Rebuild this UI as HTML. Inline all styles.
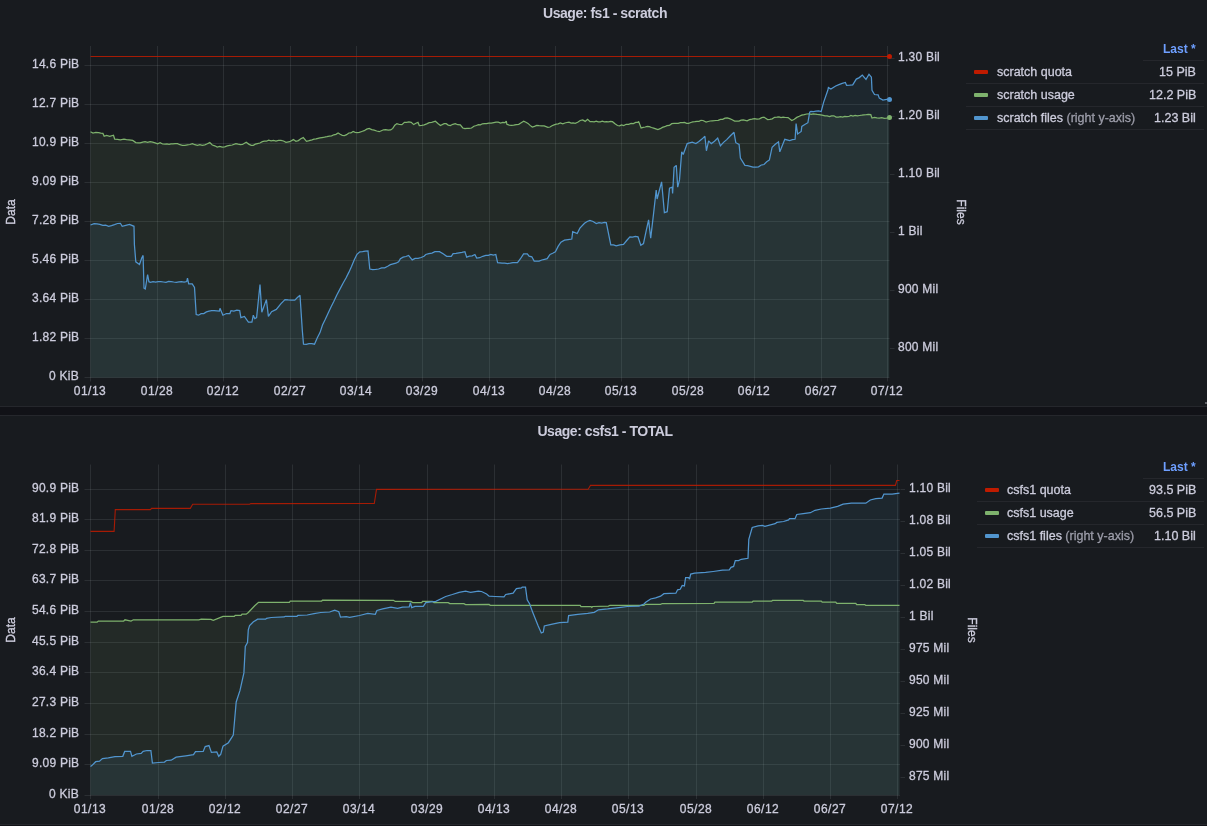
<!DOCTYPE html>
<html><head><meta charset="utf-8"><style>
html,body{margin:0;padding:0;}
body{width:1207px;height:826px;overflow:hidden;background:#111217;position:relative;font-family:"Liberation Sans", sans-serif;-webkit-font-smoothing:antialiased;}
.panel{position:absolute;left:0;width:1207px;background:#181b1f;}
svg{position:absolute;left:0;top:0;}
.t{will-change:transform;-webkit-text-stroke:0.3px currentColor;}
</style></head><body>
<div class="panel" style="top:0;height:406px;border-bottom:1px solid #25272c;"></div>
<div class="panel" style="top:415px;height:408px;border-top:1px solid #25272c;border-bottom:1px solid #25272c;"></div>
<svg width="1207" height="826" viewBox="0 0 1207 826">

<rect x="84.5" y="65" width="805.0" height="1" fill="rgba(240,250,255,0.09)"/>
<rect x="84.5" y="104" width="805.0" height="1" fill="rgba(240,250,255,0.09)"/>
<rect x="84.5" y="143" width="805.0" height="1" fill="rgba(240,250,255,0.09)"/>
<rect x="84.5" y="182" width="805.0" height="1" fill="rgba(240,250,255,0.09)"/>
<rect x="84.5" y="221" width="805.0" height="1" fill="rgba(240,250,255,0.09)"/>
<rect x="84.5" y="260" width="805.0" height="1" fill="rgba(240,250,255,0.09)"/>
<rect x="84.5" y="299" width="805.0" height="1" fill="rgba(240,250,255,0.09)"/>
<rect x="84.5" y="338" width="805.0" height="1" fill="rgba(240,250,255,0.09)"/>
<rect x="84.5" y="377" width="805.0" height="1" fill="rgba(240,250,255,0.09)"/>
<rect x="90" y="46" width="1" height="335.5" fill="rgba(240,250,255,0.09)"/>
<rect x="157" y="46" width="1" height="335.5" fill="rgba(240,250,255,0.09)"/>
<rect x="223" y="46" width="1" height="335.5" fill="rgba(240,250,255,0.09)"/>
<rect x="290" y="46" width="1" height="335.5" fill="rgba(240,250,255,0.09)"/>
<rect x="356" y="46" width="1" height="335.5" fill="rgba(240,250,255,0.09)"/>
<rect x="422" y="46" width="1" height="335.5" fill="rgba(240,250,255,0.09)"/>
<rect x="489" y="46" width="1" height="335.5" fill="rgba(240,250,255,0.09)"/>
<rect x="555" y="46" width="1" height="335.5" fill="rgba(240,250,255,0.09)"/>
<rect x="621" y="46" width="1" height="335.5" fill="rgba(240,250,255,0.09)"/>
<rect x="688" y="46" width="1" height="335.5" fill="rgba(240,250,255,0.09)"/>
<rect x="754" y="46" width="1" height="335.5" fill="rgba(240,250,255,0.09)"/>
<rect x="821" y="46" width="1" height="335.5" fill="rgba(240,250,255,0.09)"/>
<rect x="887" y="46" width="1" height="335.5" fill="rgba(240,250,255,0.09)"/>
<rect x="890.0" y="58" width="4.5" height="1" fill="rgba(240,250,255,0.09)"/>
<rect x="890.0" y="116" width="4.5" height="1" fill="rgba(240,250,255,0.09)"/>
<rect x="890.0" y="174" width="4.5" height="1" fill="rgba(240,250,255,0.09)"/>
<rect x="890.0" y="232" width="4.5" height="1" fill="rgba(240,250,255,0.09)"/>
<rect x="890.0" y="290" width="4.5" height="1" fill="rgba(240,250,255,0.09)"/>
<rect x="890.0" y="348" width="4.5" height="1" fill="rgba(240,250,255,0.09)"/>
<path d="M90.5,131.7 L93.0,133.0 L95.8,132.5 L98.6,132.6 L100.8,133.1 L102.9,133.4 L104.2,136.3 L106.6,135.5 L109.7,136.3 L113.5,135.2 L114.7,139.2 L117.5,139.3 L120.3,139.8 L124.0,139.2 L126.5,139.6 L129.0,139.8 L132.7,140.4 L135.8,142.6 L138.0,142.9 L140.2,142.9 L142.7,142.1 L145.1,141.7 L147.6,142.4 L150.1,141.7 L152.6,142.1 L155.1,142.8 L157.6,143.8 L160.1,142.6 L162.6,144.0 L165.0,144.2 L167.0,144.0 L169.0,144.4 L171.0,143.8 L173.0,143.9 L175.0,143.6 L177.5,143.6 L179.9,144.7 L182.4,145.4 L184.9,145.4 L187.4,144.8 L189.9,144.5 L192.4,143.6 L194.9,144.7 L197.4,145.4 L199.9,144.7 L202.3,145.3 L204.8,144.8 L207.3,143.8 L209.8,142.6 L212.3,145.0 L214.8,145.8 L217.2,147.0 L219.7,146.4 L222.2,147.0 L224.7,146.8 L227.2,145.8 L229.7,145.4 L232.2,145.0 L235.9,143.6 L238.1,144.2 L240.3,144.7 L242.5,144.5 L246.2,142.3 L248.7,144.1 L251.2,145.4 L253.3,145.3 L255.3,144.1 L257.4,143.6 L259.9,143.0 L262.3,141.7 L264.4,141.1 L266.5,141.2 L268.6,140.1 L271.1,140.9 L273.5,140.3 L276.0,141.1 L278.5,140.3 L281.0,140.4 L283.5,141.0 L286.0,142.3 L289.7,141.7 L293.4,139.6 L295.9,141.3 L298.4,140.6 L300.8,138.8 L303.3,137.6 L306.5,141.3 L309.2,140.7 L312.0,139.8 L314.0,139.1 L316.0,138.9 L318.0,138.3 L320.0,137.9 L322.0,137.6 L324.5,137.2 L326.9,136.7 L329.4,136.1 L331.6,135.8 L333.8,134.8 L335.9,134.3 L338.1,133.0 L340.2,134.3 L342.3,135.3 L344.4,135.5 L346.6,134.7 L348.8,133.0 L350.9,132.9 L353.1,131.4 L355.2,132.3 L357.2,132.6 L359.3,132.4 L361.8,131.5 L364.2,130.7 L366.7,129.1 L369.2,128.4 L371.7,129.6 L374.2,130.1 L376.7,131.0 L379.2,131.7 L381.4,130.7 L383.5,129.8 L385.7,129.6 L388.2,130.2 L390.7,129.9 L392.8,128.4 L394.8,125.2 L396.9,123.6 L399.4,124.5 L401.9,124.6 L404.4,122.4 L406.7,122.3 L408.9,122.0 L411.2,122.4 L413.7,124.6 L415.9,123.3 L418.0,122.4 L419.3,125.5 L421.8,125.3 L424.2,124.9 L426.7,123.9 L429.2,122.6 L431.7,122.4 L435.4,121.2 L437.9,123.5 L440.4,125.5 L444.1,123.6 L446.2,123.7 L448.2,125.1 L450.3,125.5 L452.8,124.3 L455.3,123.6 L457.8,124.7 L460.3,124.9 L462.8,128.0 L464.9,128.7 L466.9,128.3 L469.0,128.4 L471.5,128.0 L473.9,126.2 L476.4,125.5 L478.4,124.6 L480.4,124.9 L482.4,123.8 L484.4,123.6 L486.4,123.6 L488.9,123.2 L491.3,123.1 L493.8,122.6 L496.0,122.2 L498.3,122.1 L500.5,123.0 L502.8,122.4 L505.0,122.6 L506.3,121.2 L506.9,124.3 L509.2,125.1 L511.4,125.3 L513.7,125.1 L516.2,124.6 L518.7,124.3 L521.2,122.7 L523.7,121.2 L525.9,122.3 L528.0,123.4 L530.1,125.4 L532.3,127.1 L534.5,126.4 L536.7,125.5 L539.2,125.7 L541.7,125.8 L544.2,125.8 L547.9,127.3 L550.0,127.0 L552.0,125.7 L554.1,124.9 L556.2,124.2 L558.2,123.9 L560.3,123.0 L562.8,123.9 L564.9,123.0 L566.9,122.5 L569.0,122.1 L571.1,123.1 L573.1,123.0 L575.2,123.4 L577.7,122.3 L580.2,120.5 L582.7,119.9 L585.2,121.4 L587.6,119.3 L590.1,121.7 L592.1,121.6 L594.2,121.8 L596.2,121.1 L598.2,121.8 L600.3,121.9 L602.3,121.2 L604.4,121.9 L606.4,121.7 L608.4,121.9 L610.5,121.5 L612.5,121.7 L615.0,123.8 L617.5,125.5 L619.6,125.8 L621.6,124.9 L623.7,125.5 L626.2,124.3 L628.6,124.3 L631.1,123.4 L633.4,123.6 L635.7,122.4 L638.0,122.4 L638.6,121.4 L641.1,128.0 L643.2,127.4 L645.2,127.0 L647.3,126.3 L649.4,126.7 L651.5,127.5 L653.7,128.1 L655.8,128.8 L657.9,129.6 L660.2,128.7 L662.4,127.4 L664.7,126.7 L667.0,125.7 L669.4,125.4 L671.7,123.7 L674.0,123.4 L676.1,123.3 L678.2,123.3 L680.4,122.6 L682.5,122.6 L684.6,122.5 L686.6,123.4 L688.7,123.3 L690.8,122.5 L692.8,121.9 L694.9,121.7 L696.9,121.3 L699.0,121.3 L701.0,120.3 L703.0,120.5 L706.1,122.1 L708.2,121.5 L710.2,121.0 L712.3,120.8 L716.0,120.5 L718.2,120.4 L720.5,119.4 L722.7,119.4 L725.0,118.1 L727.2,118.0 L729.7,118.6 L732.2,119.7 L734.6,121.1 L736.8,121.0 L739.0,121.0 L741.1,120.1 L743.3,119.9 L747.1,120.8 L749.5,119.7 L752.0,119.2 L754.5,118.6 L757.0,119.0 L759.5,118.9 L761.7,117.6 L763.9,117.1 L767.6,119.6 L769.9,119.3 L772.2,118.8 L774.6,117.3 L776.9,117.1 L779.0,116.8 L781.0,117.5 L783.1,117.1 L785.6,117.5 L788.1,117.6 L791.8,120.5 L794.3,119.3 L796.8,117.4 L799.3,116.3 L801.7,115.1 L804.2,114.6 L806.7,114.0 L809.2,113.9 L811.2,114.4 L813.2,113.9 L815.2,114.1 L817.2,114.4 L819.2,114.6 L822.1,115.2 L825.0,115.9 L827.2,115.9 L829.4,116.6 L831.6,115.8 L833.9,115.8 L836.1,117.0 L838.3,117.0 L840.5,116.7 L842.6,117.1 L844.7,116.3 L846.8,116.7 L848.8,116.5 L850.9,115.5 L853.0,116.0 L855.1,115.5 L857.3,115.8 L859.6,115.5 L861.8,115.2 L864.1,114.8 L866.3,114.7 L868.6,114.5 L870.8,114.7 L872.0,118.1 L874.5,117.5 L876.9,117.9 L879.3,118.1 L881.8,117.7 L884.2,118.4 L886.6,118.1 L889.2,117.5 L889.2,377.5 L90.5,377.5 Z" fill="#87ac73" fill-opacity="0.1" stroke="none"/>
<path d="M90.5,225.0 L94.1,223.6 L97.0,223.9 L99.9,224.3 L102.8,225.4 L105.7,225.2 L108.6,226.3 L111.5,225.6 L114.5,224.6 L117.5,223.5 L120.4,223.3 L122.2,226.3 L125.8,225.4 L129.5,224.5 L134.0,226.3 L134.4,244.5 L135.8,261.8 L139.5,264.5 L141.7,258.1 L143.1,255.4 L144.0,288.1 L145.3,289.0 L147.6,274.5 L148.9,281.7 L150.4,282.3 L153.0,281.7 L155.6,282.1 L158.2,281.6 L160.8,281.6 L163.4,282.0 L166.0,282.4 L168.6,281.5 L171.1,281.6 L173.7,282.0 L176.3,282.3 L178.9,281.8 L181.5,281.6 L184.1,282.2 L186.7,281.6 L187.5,278.1 L188.7,283.9 L192.2,283.9 L194.5,287.4 L196.2,314.6 L198.5,315.2 L201.1,313.6 L203.8,313.6 L206.4,311.9 L209.0,311.1 L211.6,310.6 L214.2,310.6 L216.8,310.8 L219.4,311.0 L220.0,308.3 L222.9,315.2 L226.4,313.5 L229.9,313.5 L231.0,310.6 L233.9,311.0 L236.8,310.2 L239.7,310.6 L240.9,317.6 L244.4,316.4 L248.4,322.2 L251.9,322.2 L253.3,315.2 L254.8,318.7 L256.6,317.6 L260.0,284.5 L261.8,312.3 L266.4,299.6 L268.4,316.4 L271.6,311.7 L276.3,309.4 L281.0,303.6 L285.0,299.6 L288.3,299.9 L291.5,300.1 L294.8,300.1 L297.4,297.5 L300.0,295.3 L302.3,330.3 L303.5,344.2 L306.2,344.3 L309.0,343.7 L311.8,343.7 L314.5,344.2 L317.2,338.0 L320.0,332.6 L322.5,325.0 L325.3,319.3 L328.2,313.0 L331.0,306.9 L333.9,301.3 L336.7,295.2 L339.8,289.4 L342.9,283.5 L346.0,278.0 L348.8,272.4 L351.5,266.4 L354.2,259.9 L357.0,254.3 L359.8,251.8 L362.5,251.6 L365.3,251.2 L368.0,250.9 L369.8,269.0 L372.7,269.5 L375.7,269.3 L378.6,269.0 L381.6,267.8 L384.7,267.8 L387.7,266.3 L390.4,264.7 L393.1,263.9 L395.9,263.2 L398.6,261.7 L400.4,258.6 L403.1,257.1 L405.9,256.5 L408.6,255.4 L412.2,259.9 L415.1,258.4 L418.1,258.3 L421.1,257.5 L424.0,256.3 L425.8,254.5 L428.8,253.7 L431.9,253.1 L434.9,251.7 L439.5,251.7 L443.1,253.8 L446.7,256.3 L451.3,256.3 L453.1,253.6 L456.1,253.4 L459.0,252.8 L461.9,252.3 L464.9,251.7 L466.7,257.2 L469.4,256.2 L472.2,255.8 L474.9,254.5 L476.7,258.1 L479.7,257.7 L482.8,256.3 L485.8,255.4 L488.3,255.4 L490.8,254.4 L493.3,255.0 L495.8,254.5 L497.6,262.6 L502.1,263.2 L504.8,263.2 L507.6,263.5 L510.3,263.1 L513.0,262.6 L517.5,262.6 L520.3,259.0 L523.6,253.9 L527.3,253.9 L529.1,256.2 L531.8,256.8 L534.2,261.1 L539.1,261.1 L541.8,260.0 L544.5,259.3 L547.2,258.6 L550.0,254.4 L552.7,253.3 L555.4,251.7 L558.1,246.4 L560.9,242.2 L564.5,240.2 L568.1,239.6 L571.8,239.0 L572.7,231.7 L577.2,233.5 L579.9,228.1 L584.5,223.2 L587.2,221.5 L589.9,220.5 L593.1,221.5 L596.3,223.5 L599.0,222.6 L601.7,223.0 L604.4,222.3 L606.3,222.6 L610.8,244.8 L613.5,244.9 L616.2,245.9 L619.9,244.8 L623.5,244.4 L626.7,240.5 L629.9,236.8 L632.6,237.2 L635.3,236.3 L638.0,236.8 L640.8,245.3 L643.5,243.5 L646.0,231.6 L648.6,219.9 L650.7,238.1 L653.5,214.1 L656.2,190.0 L657.1,199.0 L661.6,181.8 L664.4,212.6 L667.2,211.7 L669.5,188.1 L672.3,187.2 L672.6,193.5 L674.1,167.2 L676.3,165.4 L677.7,187.2 L679.5,179.9 L681.7,151.8 L683.2,154.5 L687.2,143.6 L692.2,142.1 L695.9,143.6 L698.9,141.6 L701.9,139.1 L704.9,136.3 L706.4,150.8 L708.6,140.9 L711.3,143.6 L714.5,141.3 L717.7,138.1 L720.4,145.8 L723.5,142.4 L726.7,139.6 L730.4,135.8 L734.0,132.3 L735.8,142.7 L739.1,144.5 L740.4,158.1 L744.9,165.4 L747.6,165.7 L750.3,166.3 L753.0,167.2 L755.8,167.2 L758.5,166.8 L761.3,165.0 L764.0,164.5 L766.7,161.8 L769.4,159.9 L772.1,147.2 L775.3,144.2 L778.5,141.8 L779.8,151.8 L784.8,139.3 L789.7,140.5 L792.4,139.6 L795.1,139.3 L796.1,123.6 L797.6,133.9 L801.2,131.4 L801.8,126.4 L804.8,124.5 L807.9,122.7 L809.7,112.1 L810.9,111.5 L813.5,111.6 L816.0,111.2 L818.6,110.9 L821.2,111.5 L823.6,102.4 L827.8,90.3 L828.4,87.6 L830.9,89.1 L835.7,86.0 L838.9,84.7 L842.2,83.4 L845.4,82.4 L846.6,85.4 L849.7,85.2 L852.7,84.8 L856.3,79.1 L859.3,77.6 L862.3,75.1 L866.0,79.4 L869.0,74.3 L871.4,77.2 L872.0,90.3 L874.5,94.5 L878.1,94.9 L879.3,98.1 L882.9,100.0 L886.6,99.4 L889.2,99.4 L889.2,377.5 L90.5,377.5 Z" fill="#5195be" fill-opacity="0.1" stroke="none"/>
<path d="M90.5,131.7 L93.0,133.0 L95.8,132.5 L98.6,132.6 L100.8,133.1 L102.9,133.4 L104.2,136.3 L106.6,135.5 L109.7,136.3 L113.5,135.2 L114.7,139.2 L117.5,139.3 L120.3,139.8 L124.0,139.2 L126.5,139.6 L129.0,139.8 L132.7,140.4 L135.8,142.6 L138.0,142.9 L140.2,142.9 L142.7,142.1 L145.1,141.7 L147.6,142.4 L150.1,141.7 L152.6,142.1 L155.1,142.8 L157.6,143.8 L160.1,142.6 L162.6,144.0 L165.0,144.2 L167.0,144.0 L169.0,144.4 L171.0,143.8 L173.0,143.9 L175.0,143.6 L177.5,143.6 L179.9,144.7 L182.4,145.4 L184.9,145.4 L187.4,144.8 L189.9,144.5 L192.4,143.6 L194.9,144.7 L197.4,145.4 L199.9,144.7 L202.3,145.3 L204.8,144.8 L207.3,143.8 L209.8,142.6 L212.3,145.0 L214.8,145.8 L217.2,147.0 L219.7,146.4 L222.2,147.0 L224.7,146.8 L227.2,145.8 L229.7,145.4 L232.2,145.0 L235.9,143.6 L238.1,144.2 L240.3,144.7 L242.5,144.5 L246.2,142.3 L248.7,144.1 L251.2,145.4 L253.3,145.3 L255.3,144.1 L257.4,143.6 L259.9,143.0 L262.3,141.7 L264.4,141.1 L266.5,141.2 L268.6,140.1 L271.1,140.9 L273.5,140.3 L276.0,141.1 L278.5,140.3 L281.0,140.4 L283.5,141.0 L286.0,142.3 L289.7,141.7 L293.4,139.6 L295.9,141.3 L298.4,140.6 L300.8,138.8 L303.3,137.6 L306.5,141.3 L309.2,140.7 L312.0,139.8 L314.0,139.1 L316.0,138.9 L318.0,138.3 L320.0,137.9 L322.0,137.6 L324.5,137.2 L326.9,136.7 L329.4,136.1 L331.6,135.8 L333.8,134.8 L335.9,134.3 L338.1,133.0 L340.2,134.3 L342.3,135.3 L344.4,135.5 L346.6,134.7 L348.8,133.0 L350.9,132.9 L353.1,131.4 L355.2,132.3 L357.2,132.6 L359.3,132.4 L361.8,131.5 L364.2,130.7 L366.7,129.1 L369.2,128.4 L371.7,129.6 L374.2,130.1 L376.7,131.0 L379.2,131.7 L381.4,130.7 L383.5,129.8 L385.7,129.6 L388.2,130.2 L390.7,129.9 L392.8,128.4 L394.8,125.2 L396.9,123.6 L399.4,124.5 L401.9,124.6 L404.4,122.4 L406.7,122.3 L408.9,122.0 L411.2,122.4 L413.7,124.6 L415.9,123.3 L418.0,122.4 L419.3,125.5 L421.8,125.3 L424.2,124.9 L426.7,123.9 L429.2,122.6 L431.7,122.4 L435.4,121.2 L437.9,123.5 L440.4,125.5 L444.1,123.6 L446.2,123.7 L448.2,125.1 L450.3,125.5 L452.8,124.3 L455.3,123.6 L457.8,124.7 L460.3,124.9 L462.8,128.0 L464.9,128.7 L466.9,128.3 L469.0,128.4 L471.5,128.0 L473.9,126.2 L476.4,125.5 L478.4,124.6 L480.4,124.9 L482.4,123.8 L484.4,123.6 L486.4,123.6 L488.9,123.2 L491.3,123.1 L493.8,122.6 L496.0,122.2 L498.3,122.1 L500.5,123.0 L502.8,122.4 L505.0,122.6 L506.3,121.2 L506.9,124.3 L509.2,125.1 L511.4,125.3 L513.7,125.1 L516.2,124.6 L518.7,124.3 L521.2,122.7 L523.7,121.2 L525.9,122.3 L528.0,123.4 L530.1,125.4 L532.3,127.1 L534.5,126.4 L536.7,125.5 L539.2,125.7 L541.7,125.8 L544.2,125.8 L547.9,127.3 L550.0,127.0 L552.0,125.7 L554.1,124.9 L556.2,124.2 L558.2,123.9 L560.3,123.0 L562.8,123.9 L564.9,123.0 L566.9,122.5 L569.0,122.1 L571.1,123.1 L573.1,123.0 L575.2,123.4 L577.7,122.3 L580.2,120.5 L582.7,119.9 L585.2,121.4 L587.6,119.3 L590.1,121.7 L592.1,121.6 L594.2,121.8 L596.2,121.1 L598.2,121.8 L600.3,121.9 L602.3,121.2 L604.4,121.9 L606.4,121.7 L608.4,121.9 L610.5,121.5 L612.5,121.7 L615.0,123.8 L617.5,125.5 L619.6,125.8 L621.6,124.9 L623.7,125.5 L626.2,124.3 L628.6,124.3 L631.1,123.4 L633.4,123.6 L635.7,122.4 L638.0,122.4 L638.6,121.4 L641.1,128.0 L643.2,127.4 L645.2,127.0 L647.3,126.3 L649.4,126.7 L651.5,127.5 L653.7,128.1 L655.8,128.8 L657.9,129.6 L660.2,128.7 L662.4,127.4 L664.7,126.7 L667.0,125.7 L669.4,125.4 L671.7,123.7 L674.0,123.4 L676.1,123.3 L678.2,123.3 L680.4,122.6 L682.5,122.6 L684.6,122.5 L686.6,123.4 L688.7,123.3 L690.8,122.5 L692.8,121.9 L694.9,121.7 L696.9,121.3 L699.0,121.3 L701.0,120.3 L703.0,120.5 L706.1,122.1 L708.2,121.5 L710.2,121.0 L712.3,120.8 L716.0,120.5 L718.2,120.4 L720.5,119.4 L722.7,119.4 L725.0,118.1 L727.2,118.0 L729.7,118.6 L732.2,119.7 L734.6,121.1 L736.8,121.0 L739.0,121.0 L741.1,120.1 L743.3,119.9 L747.1,120.8 L749.5,119.7 L752.0,119.2 L754.5,118.6 L757.0,119.0 L759.5,118.9 L761.7,117.6 L763.9,117.1 L767.6,119.6 L769.9,119.3 L772.2,118.8 L774.6,117.3 L776.9,117.1 L779.0,116.8 L781.0,117.5 L783.1,117.1 L785.6,117.5 L788.1,117.6 L791.8,120.5 L794.3,119.3 L796.8,117.4 L799.3,116.3 L801.7,115.1 L804.2,114.6 L806.7,114.0 L809.2,113.9 L811.2,114.4 L813.2,113.9 L815.2,114.1 L817.2,114.4 L819.2,114.6 L822.1,115.2 L825.0,115.9 L827.2,115.9 L829.4,116.6 L831.6,115.8 L833.9,115.8 L836.1,117.0 L838.3,117.0 L840.5,116.7 L842.6,117.1 L844.7,116.3 L846.8,116.7 L848.8,116.5 L850.9,115.5 L853.0,116.0 L855.1,115.5 L857.3,115.8 L859.6,115.5 L861.8,115.2 L864.1,114.8 L866.3,114.7 L868.6,114.5 L870.8,114.7 L872.0,118.1 L874.5,117.5 L876.9,117.9 L879.3,118.1 L881.8,117.7 L884.2,118.4 L886.6,118.1 L889.2,117.5" fill="none" stroke="#7eb26d" stroke-width="1.25" stroke-linejoin="miter" stroke-miterlimit="2"/>
<path d="M90.5,225.0 L94.1,223.6 L97.0,223.9 L99.9,224.3 L102.8,225.4 L105.7,225.2 L108.6,226.3 L111.5,225.6 L114.5,224.6 L117.5,223.5 L120.4,223.3 L122.2,226.3 L125.8,225.4 L129.5,224.5 L134.0,226.3 L134.4,244.5 L135.8,261.8 L139.5,264.5 L141.7,258.1 L143.1,255.4 L144.0,288.1 L145.3,289.0 L147.6,274.5 L148.9,281.7 L150.4,282.3 L153.0,281.7 L155.6,282.1 L158.2,281.6 L160.8,281.6 L163.4,282.0 L166.0,282.4 L168.6,281.5 L171.1,281.6 L173.7,282.0 L176.3,282.3 L178.9,281.8 L181.5,281.6 L184.1,282.2 L186.7,281.6 L187.5,278.1 L188.7,283.9 L192.2,283.9 L194.5,287.4 L196.2,314.6 L198.5,315.2 L201.1,313.6 L203.8,313.6 L206.4,311.9 L209.0,311.1 L211.6,310.6 L214.2,310.6 L216.8,310.8 L219.4,311.0 L220.0,308.3 L222.9,315.2 L226.4,313.5 L229.9,313.5 L231.0,310.6 L233.9,311.0 L236.8,310.2 L239.7,310.6 L240.9,317.6 L244.4,316.4 L248.4,322.2 L251.9,322.2 L253.3,315.2 L254.8,318.7 L256.6,317.6 L260.0,284.5 L261.8,312.3 L266.4,299.6 L268.4,316.4 L271.6,311.7 L276.3,309.4 L281.0,303.6 L285.0,299.6 L288.3,299.9 L291.5,300.1 L294.8,300.1 L297.4,297.5 L300.0,295.3 L302.3,330.3 L303.5,344.2 L306.2,344.3 L309.0,343.7 L311.8,343.7 L314.5,344.2 L317.2,338.0 L320.0,332.6 L322.5,325.0 L325.3,319.3 L328.2,313.0 L331.0,306.9 L333.9,301.3 L336.7,295.2 L339.8,289.4 L342.9,283.5 L346.0,278.0 L348.8,272.4 L351.5,266.4 L354.2,259.9 L357.0,254.3 L359.8,251.8 L362.5,251.6 L365.3,251.2 L368.0,250.9 L369.8,269.0 L372.7,269.5 L375.7,269.3 L378.6,269.0 L381.6,267.8 L384.7,267.8 L387.7,266.3 L390.4,264.7 L393.1,263.9 L395.9,263.2 L398.6,261.7 L400.4,258.6 L403.1,257.1 L405.9,256.5 L408.6,255.4 L412.2,259.9 L415.1,258.4 L418.1,258.3 L421.1,257.5 L424.0,256.3 L425.8,254.5 L428.8,253.7 L431.9,253.1 L434.9,251.7 L439.5,251.7 L443.1,253.8 L446.7,256.3 L451.3,256.3 L453.1,253.6 L456.1,253.4 L459.0,252.8 L461.9,252.3 L464.9,251.7 L466.7,257.2 L469.4,256.2 L472.2,255.8 L474.9,254.5 L476.7,258.1 L479.7,257.7 L482.8,256.3 L485.8,255.4 L488.3,255.4 L490.8,254.4 L493.3,255.0 L495.8,254.5 L497.6,262.6 L502.1,263.2 L504.8,263.2 L507.6,263.5 L510.3,263.1 L513.0,262.6 L517.5,262.6 L520.3,259.0 L523.6,253.9 L527.3,253.9 L529.1,256.2 L531.8,256.8 L534.2,261.1 L539.1,261.1 L541.8,260.0 L544.5,259.3 L547.2,258.6 L550.0,254.4 L552.7,253.3 L555.4,251.7 L558.1,246.4 L560.9,242.2 L564.5,240.2 L568.1,239.6 L571.8,239.0 L572.7,231.7 L577.2,233.5 L579.9,228.1 L584.5,223.2 L587.2,221.5 L589.9,220.5 L593.1,221.5 L596.3,223.5 L599.0,222.6 L601.7,223.0 L604.4,222.3 L606.3,222.6 L610.8,244.8 L613.5,244.9 L616.2,245.9 L619.9,244.8 L623.5,244.4 L626.7,240.5 L629.9,236.8 L632.6,237.2 L635.3,236.3 L638.0,236.8 L640.8,245.3 L643.5,243.5 L646.0,231.6 L648.6,219.9 L650.7,238.1 L653.5,214.1 L656.2,190.0 L657.1,199.0 L661.6,181.8 L664.4,212.6 L667.2,211.7 L669.5,188.1 L672.3,187.2 L672.6,193.5 L674.1,167.2 L676.3,165.4 L677.7,187.2 L679.5,179.9 L681.7,151.8 L683.2,154.5 L687.2,143.6 L692.2,142.1 L695.9,143.6 L698.9,141.6 L701.9,139.1 L704.9,136.3 L706.4,150.8 L708.6,140.9 L711.3,143.6 L714.5,141.3 L717.7,138.1 L720.4,145.8 L723.5,142.4 L726.7,139.6 L730.4,135.8 L734.0,132.3 L735.8,142.7 L739.1,144.5 L740.4,158.1 L744.9,165.4 L747.6,165.7 L750.3,166.3 L753.0,167.2 L755.8,167.2 L758.5,166.8 L761.3,165.0 L764.0,164.5 L766.7,161.8 L769.4,159.9 L772.1,147.2 L775.3,144.2 L778.5,141.8 L779.8,151.8 L784.8,139.3 L789.7,140.5 L792.4,139.6 L795.1,139.3 L796.1,123.6 L797.6,133.9 L801.2,131.4 L801.8,126.4 L804.8,124.5 L807.9,122.7 L809.7,112.1 L810.9,111.5 L813.5,111.6 L816.0,111.2 L818.6,110.9 L821.2,111.5 L823.6,102.4 L827.8,90.3 L828.4,87.6 L830.9,89.1 L835.7,86.0 L838.9,84.7 L842.2,83.4 L845.4,82.4 L846.6,85.4 L849.7,85.2 L852.7,84.8 L856.3,79.1 L859.3,77.6 L862.3,75.1 L866.0,79.4 L869.0,74.3 L871.4,77.2 L872.0,90.3 L874.5,94.5 L878.1,94.9 L879.3,98.1 L882.9,100.0 L886.6,99.4 L889.2,99.4" fill="none" stroke="#5195ce" stroke-width="1.25" stroke-linejoin="miter" stroke-miterlimit="2"/>
<path d="M90.5,56.5 L889.2,56.5" fill="none" stroke="#bf1b00" stroke-opacity="0.85" stroke-width="1.1" stroke-linejoin="miter" stroke-miterlimit="2"/>
<circle cx="889.5" cy="56.5" r="2.5" fill="#bf1b00"/>
<circle cx="889.5" cy="99.4" r="2.5" fill="#5195ce"/>
<circle cx="889.5" cy="117.5" r="2.5" fill="#7eb26d"/>
<rect x="84.5" y="489" width="815.5" height="1" fill="rgba(240,250,255,0.09)"/>
<rect x="84.5" y="519" width="815.5" height="1" fill="rgba(240,250,255,0.09)"/>
<rect x="84.5" y="550" width="815.5" height="1" fill="rgba(240,250,255,0.09)"/>
<rect x="84.5" y="580" width="815.5" height="1" fill="rgba(240,250,255,0.09)"/>
<rect x="84.5" y="611" width="815.5" height="1" fill="rgba(240,250,255,0.09)"/>
<rect x="84.5" y="642" width="815.5" height="1" fill="rgba(240,250,255,0.09)"/>
<rect x="84.5" y="672" width="815.5" height="1" fill="rgba(240,250,255,0.09)"/>
<rect x="84.5" y="703" width="815.5" height="1" fill="rgba(240,250,255,0.09)"/>
<rect x="84.5" y="734" width="815.5" height="1" fill="rgba(240,250,255,0.09)"/>
<rect x="84.5" y="764" width="815.5" height="1" fill="rgba(240,250,255,0.09)"/>
<rect x="84.5" y="795" width="815.5" height="1" fill="rgba(240,250,255,0.09)"/>
<rect x="90" y="464.5" width="1" height="334.5" fill="rgba(240,250,255,0.09)"/>
<rect x="158" y="464.5" width="1" height="334.5" fill="rgba(240,250,255,0.09)"/>
<rect x="225" y="464.5" width="1" height="334.5" fill="rgba(240,250,255,0.09)"/>
<rect x="292" y="464.5" width="1" height="334.5" fill="rgba(240,250,255,0.09)"/>
<rect x="359" y="464.5" width="1" height="334.5" fill="rgba(240,250,255,0.09)"/>
<rect x="427" y="464.5" width="1" height="334.5" fill="rgba(240,250,255,0.09)"/>
<rect x="494" y="464.5" width="1" height="334.5" fill="rgba(240,250,255,0.09)"/>
<rect x="561" y="464.5" width="1" height="334.5" fill="rgba(240,250,255,0.09)"/>
<rect x="628" y="464.5" width="1" height="334.5" fill="rgba(240,250,255,0.09)"/>
<rect x="696" y="464.5" width="1" height="334.5" fill="rgba(240,250,255,0.09)"/>
<rect x="763" y="464.5" width="1" height="334.5" fill="rgba(240,250,255,0.09)"/>
<rect x="830" y="464.5" width="1" height="334.5" fill="rgba(240,250,255,0.09)"/>
<rect x="897" y="464.5" width="1" height="334.5" fill="rgba(240,250,255,0.09)"/>
<rect x="900.5" y="489" width="4.5" height="1" fill="rgba(240,250,255,0.09)"/>
<rect x="900.5" y="521" width="4.5" height="1" fill="rgba(240,250,255,0.09)"/>
<rect x="900.5" y="553" width="4.5" height="1" fill="rgba(240,250,255,0.09)"/>
<rect x="900.5" y="585" width="4.5" height="1" fill="rgba(240,250,255,0.09)"/>
<rect x="900.5" y="617" width="4.5" height="1" fill="rgba(240,250,255,0.09)"/>
<rect x="900.5" y="649" width="4.5" height="1" fill="rgba(240,250,255,0.09)"/>
<rect x="900.5" y="681" width="4.5" height="1" fill="rgba(240,250,255,0.09)"/>
<rect x="900.5" y="713" width="4.5" height="1" fill="rgba(240,250,255,0.09)"/>
<rect x="900.5" y="745" width="4.5" height="1" fill="rgba(240,250,255,0.09)"/>
<rect x="900.5" y="777" width="4.5" height="1" fill="rgba(240,250,255,0.09)"/>
<path d="M90.5,622.2 L97.1,622.2 L98.3,621.0 L123.7,621.0 L125.0,619.8 L131.0,621.0 L133.4,619.8 L198.8,619.8 L201.2,619.1 L210.9,619.3 L213.3,620.3 L223.0,616.4 L234.3,616.4 L235.2,615.3 L241.1,615.3 L242.0,614.2 L246.2,614.2 L248.3,612.5 L254.7,605.7 L258.5,602.3 L289.4,602.3 L290.3,601.0 L321.6,601.0 L322.5,600.2 L393.5,600.3 L395.2,601.4 L410.9,601.4 L412.6,602.6 L421.7,602.6 L422.5,601.4 L432.4,601.4 L434.1,602.6 L448.2,602.6 L449.8,603.6 L463.9,603.6 L465.6,604.5 L489.1,604.4 L490.2,605.3 L580.2,605.3 L581.0,606.5 L591.0,606.5 L591.8,607.3 L592.6,606.5 L608.4,606.1 L610.0,605.3 L644.0,605.3 L645.7,604.3 L660.6,604.3 L662.2,603.5 L714.1,603.4 L714.9,602.0 L752.2,602.0 L753.1,601.2 L771.7,601.2 L772.5,600.3 L803.2,600.4 L804.1,601.1 L821.3,601.1 L822.2,602.2 L835.8,602.2 L836.7,603.4 L855.8,603.4 L856.7,604.7 L864.9,604.7 L865.8,605.4 L899.5,605.4 L899.5,795 L90.5,795 Z" fill="#87ac73" fill-opacity="0.1" stroke="none"/>
<path d="M90.5,766.5 L91.8,765.6 L95.7,761.7 L99.5,761.1 L102.4,758.6 L108.3,757.8 L115.0,756.7 L122.8,756.3 L124.7,751.4 L130.5,751.4 L131.9,756.3 L136.4,754.0 L141.2,753.4 L143.1,751.4 L147.0,750.5 L150.9,750.5 L152.4,763.1 L158.6,762.5 L164.5,762.1 L166.4,760.5 L171.2,760.2 L176.1,757.2 L185.8,755.9 L193.5,754.7 L195.5,751.6 L203.2,751.4 L205.2,746.6 L209.0,745.6 L211.4,752.4 L216.8,752.0 L218.7,756.3 L220.7,754.3 L223.0,746.2 L228.4,742.7 L233.3,735.0 L236.2,702.0 L240.0,690.4 L243.9,672.9 L245.3,646.4 L247.5,642.5 L248.3,629.8 L249.6,625.6 L253.4,621.8 L257.6,619.2 L265.7,619.2 L266.5,618.4 L271.2,617.5 L284.3,616.9 L285.2,616.3 L297.0,616.3 L297.9,615.4 L307.2,615.0 L314.0,613.7 L320.8,612.5 L329.7,612.0 L334.7,610.2 L338.8,611.7 L340.5,617.2 L346.3,616.7 L349.6,617.3 L359.5,615.5 L367.8,613.4 L375.3,614.3 L376.9,610.5 L382.7,608.9 L391.0,607.2 L397.6,608.4 L402.6,607.2 L409.2,606.9 L410.4,602.6 L411.7,607.6 L415.0,606.4 L423.3,606.4 L425.8,602.6 L430.8,601.8 L435.8,601.4 L445.7,596.5 L452.3,594.5 L459.0,592.3 L465.6,591.2 L470.6,592.3 L478.3,591.2 L481.6,591.5 L486.6,594.0 L489.1,596.2 L494.9,596.5 L504.0,596.8 L505.7,594.5 L513.1,593.2 L516.4,588.6 L521.4,587.9 L522.2,587.1 L525.5,587.1 L527.2,599.8 L529.7,604.0 L533.0,613.1 L538.0,625.5 L541.3,633.0 L543.3,632.1 L544.3,626.0 L551.2,624.3 L559.5,622.7 L567.8,622.2 L568.6,615.6 L577.7,614.4 L587.7,613.4 L594.3,612.3 L598.4,609.8 L607.6,608.9 L620.8,607.3 L627.4,606.5 L639.0,606.1 L644.0,604.0 L645.7,602.3 L650.6,599.0 L655.6,597.8 L660.6,596.2 L663.9,593.7 L675.9,593.2 L677.6,589.8 L680.2,589.3 L682.2,585.4 L684.4,585.9 L685.6,577.5 L688.6,577.5 L689.5,579.2 L690.7,574.1 L694.6,573.2 L705.6,572.4 L713.2,571.5 L722.5,570.2 L729.3,569.8 L731.0,567.3 L733.6,566.4 L735.3,560.5 L738.6,560.5 L741.2,559.3 L748.0,558.3 L748.8,539.3 L752.2,527.5 L758.1,525.8 L762.4,525.4 L764.9,526.3 L775.1,523.7 L776.8,522.4 L783.6,521.5 L788.6,519.9 L789.5,518.7 L795.0,518.7 L796.8,514.5 L803.2,513.6 L810.4,512.7 L815.0,510.3 L821.3,509.0 L830.4,508.1 L837.6,506.3 L843.1,504.1 L851.3,503.2 L865.8,503.2 L870.3,500.0 L875.8,498.7 L882.1,498.1 L883.9,494.1 L892.1,494.1 L899.5,493.2 L899.5,795 L90.5,795 Z" fill="#5195be" fill-opacity="0.1" stroke="none"/>
<path d="M90.5,622.2 L97.1,622.2 L98.3,621.0 L123.7,621.0 L125.0,619.8 L131.0,621.0 L133.4,619.8 L198.8,619.8 L201.2,619.1 L210.9,619.3 L213.3,620.3 L223.0,616.4 L234.3,616.4 L235.2,615.3 L241.1,615.3 L242.0,614.2 L246.2,614.2 L248.3,612.5 L254.7,605.7 L258.5,602.3 L289.4,602.3 L290.3,601.0 L321.6,601.0 L322.5,600.2 L393.5,600.3 L395.2,601.4 L410.9,601.4 L412.6,602.6 L421.7,602.6 L422.5,601.4 L432.4,601.4 L434.1,602.6 L448.2,602.6 L449.8,603.6 L463.9,603.6 L465.6,604.5 L489.1,604.4 L490.2,605.3 L580.2,605.3 L581.0,606.5 L591.0,606.5 L591.8,607.3 L592.6,606.5 L608.4,606.1 L610.0,605.3 L644.0,605.3 L645.7,604.3 L660.6,604.3 L662.2,603.5 L714.1,603.4 L714.9,602.0 L752.2,602.0 L753.1,601.2 L771.7,601.2 L772.5,600.3 L803.2,600.4 L804.1,601.1 L821.3,601.1 L822.2,602.2 L835.8,602.2 L836.7,603.4 L855.8,603.4 L856.7,604.7 L864.9,604.7 L865.8,605.4 L899.5,605.4" fill="none" stroke="#7eb26d" stroke-width="1.25" stroke-linejoin="miter" stroke-miterlimit="2"/>
<path d="M90.5,766.5 L91.8,765.6 L95.7,761.7 L99.5,761.1 L102.4,758.6 L108.3,757.8 L115.0,756.7 L122.8,756.3 L124.7,751.4 L130.5,751.4 L131.9,756.3 L136.4,754.0 L141.2,753.4 L143.1,751.4 L147.0,750.5 L150.9,750.5 L152.4,763.1 L158.6,762.5 L164.5,762.1 L166.4,760.5 L171.2,760.2 L176.1,757.2 L185.8,755.9 L193.5,754.7 L195.5,751.6 L203.2,751.4 L205.2,746.6 L209.0,745.6 L211.4,752.4 L216.8,752.0 L218.7,756.3 L220.7,754.3 L223.0,746.2 L228.4,742.7 L233.3,735.0 L236.2,702.0 L240.0,690.4 L243.9,672.9 L245.3,646.4 L247.5,642.5 L248.3,629.8 L249.6,625.6 L253.4,621.8 L257.6,619.2 L265.7,619.2 L266.5,618.4 L271.2,617.5 L284.3,616.9 L285.2,616.3 L297.0,616.3 L297.9,615.4 L307.2,615.0 L314.0,613.7 L320.8,612.5 L329.7,612.0 L334.7,610.2 L338.8,611.7 L340.5,617.2 L346.3,616.7 L349.6,617.3 L359.5,615.5 L367.8,613.4 L375.3,614.3 L376.9,610.5 L382.7,608.9 L391.0,607.2 L397.6,608.4 L402.6,607.2 L409.2,606.9 L410.4,602.6 L411.7,607.6 L415.0,606.4 L423.3,606.4 L425.8,602.6 L430.8,601.8 L435.8,601.4 L445.7,596.5 L452.3,594.5 L459.0,592.3 L465.6,591.2 L470.6,592.3 L478.3,591.2 L481.6,591.5 L486.6,594.0 L489.1,596.2 L494.9,596.5 L504.0,596.8 L505.7,594.5 L513.1,593.2 L516.4,588.6 L521.4,587.9 L522.2,587.1 L525.5,587.1 L527.2,599.8 L529.7,604.0 L533.0,613.1 L538.0,625.5 L541.3,633.0 L543.3,632.1 L544.3,626.0 L551.2,624.3 L559.5,622.7 L567.8,622.2 L568.6,615.6 L577.7,614.4 L587.7,613.4 L594.3,612.3 L598.4,609.8 L607.6,608.9 L620.8,607.3 L627.4,606.5 L639.0,606.1 L644.0,604.0 L645.7,602.3 L650.6,599.0 L655.6,597.8 L660.6,596.2 L663.9,593.7 L675.9,593.2 L677.6,589.8 L680.2,589.3 L682.2,585.4 L684.4,585.9 L685.6,577.5 L688.6,577.5 L689.5,579.2 L690.7,574.1 L694.6,573.2 L705.6,572.4 L713.2,571.5 L722.5,570.2 L729.3,569.8 L731.0,567.3 L733.6,566.4 L735.3,560.5 L738.6,560.5 L741.2,559.3 L748.0,558.3 L748.8,539.3 L752.2,527.5 L758.1,525.8 L762.4,525.4 L764.9,526.3 L775.1,523.7 L776.8,522.4 L783.6,521.5 L788.6,519.9 L789.5,518.7 L795.0,518.7 L796.8,514.5 L803.2,513.6 L810.4,512.7 L815.0,510.3 L821.3,509.0 L830.4,508.1 L837.6,506.3 L843.1,504.1 L851.3,503.2 L865.8,503.2 L870.3,500.0 L875.8,498.7 L882.1,498.1 L883.9,494.1 L892.1,494.1 L899.5,493.2" fill="none" stroke="#5195ce" stroke-width="1.25" stroke-linejoin="miter" stroke-miterlimit="2"/>
<path d="M90.5,531.4 L114.1,531.4 L115.3,509.6 L150.4,509.6 L151.6,508.4 L190.3,508.4 L192.7,504.3 L249.6,504.3 L250.9,503.6 L374.3,503.5 L376.5,489.4 L588.2,489.2 L590.5,485.3 L895.4,485.4 L896.7,480.5 L899.5,480.5" fill="none" stroke="#bf1b00" stroke-opacity="0.85" stroke-width="1.1" stroke-linejoin="miter" stroke-miterlimit="2"/>
</svg>
<div style="position:absolute;left:1205px;top:402px;width:2px;height:2px;background:#5f6065"></div>
<div class="t" style="position:absolute;left:505px;width:200px;text-align:center;top:6px;font-size:14px;color:#ccccdc;font-weight:700;white-space:nowrap;line-height:1;letter-spacing:-0.45px;-webkit-text-stroke:0;">Usage: fs1 - scratch</div>
<div class="t" style="position:absolute;left:505px;width:200px;text-align:center;top:424px;font-size:14px;color:#ccccdc;font-weight:700;white-space:nowrap;line-height:1;letter-spacing:-0.45px;-webkit-text-stroke:0;">Usage: csfs1 - TOTAL</div>
<div class="t" style="position:absolute;right:1127.75px;top:57.5px;font-size:12px;color:#ccccdc;font-weight:400;white-space:nowrap;line-height:1;letter-spacing:0.25px;">14.6 PiB</div>
<div class="t" style="position:absolute;right:1127.75px;top:96.5px;font-size:12px;color:#ccccdc;font-weight:400;white-space:nowrap;line-height:1;letter-spacing:0.25px;">12.7 PiB</div>
<div class="t" style="position:absolute;right:1127.75px;top:135.5px;font-size:12px;color:#ccccdc;font-weight:400;white-space:nowrap;line-height:1;letter-spacing:0.25px;">10.9 PiB</div>
<div class="t" style="position:absolute;right:1127.75px;top:174.5px;font-size:12px;color:#ccccdc;font-weight:400;white-space:nowrap;line-height:1;letter-spacing:0.25px;">9.09 PiB</div>
<div class="t" style="position:absolute;right:1127.75px;top:213.5px;font-size:12px;color:#ccccdc;font-weight:400;white-space:nowrap;line-height:1;letter-spacing:0.25px;">7.28 PiB</div>
<div class="t" style="position:absolute;right:1127.75px;top:252.5px;font-size:12px;color:#ccccdc;font-weight:400;white-space:nowrap;line-height:1;letter-spacing:0.25px;">5.46 PiB</div>
<div class="t" style="position:absolute;right:1127.75px;top:291.5px;font-size:12px;color:#ccccdc;font-weight:400;white-space:nowrap;line-height:1;letter-spacing:0.25px;">3.64 PiB</div>
<div class="t" style="position:absolute;right:1127.75px;top:330.5px;font-size:12px;color:#ccccdc;font-weight:400;white-space:nowrap;line-height:1;letter-spacing:0.25px;">1.82 PiB</div>
<div class="t" style="position:absolute;right:1127.75px;top:369.5px;font-size:12px;color:#ccccdc;font-weight:400;white-space:nowrap;line-height:1;letter-spacing:0.25px;">0 KiB</div>
<div class="t" style="position:absolute;left:898px;top:51px;font-size:12px;color:#ccccdc;font-weight:400;white-space:nowrap;line-height:1;letter-spacing:0.25px;">1.30 Bil</div>
<div class="t" style="position:absolute;left:898px;top:109px;font-size:12px;color:#ccccdc;font-weight:400;white-space:nowrap;line-height:1;letter-spacing:0.25px;">1.20 Bil</div>
<div class="t" style="position:absolute;left:898px;top:167px;font-size:12px;color:#ccccdc;font-weight:400;white-space:nowrap;line-height:1;letter-spacing:0.25px;">1.10 Bil</div>
<div class="t" style="position:absolute;left:898px;top:225px;font-size:12px;color:#ccccdc;font-weight:400;white-space:nowrap;line-height:1;letter-spacing:0.25px;">1 Bil</div>
<div class="t" style="position:absolute;left:898px;top:283px;font-size:12px;color:#ccccdc;font-weight:400;white-space:nowrap;line-height:1;letter-spacing:0.25px;">900 Mil</div>
<div class="t" style="position:absolute;left:898px;top:341px;font-size:12px;color:#ccccdc;font-weight:400;white-space:nowrap;line-height:1;letter-spacing:0.25px;">800 Mil</div>
<div class="t" style="position:absolute;left:-9.75px;width:200px;text-align:center;top:385px;font-size:12px;color:#ccccdc;font-weight:400;white-space:nowrap;line-height:1;letter-spacing:0.5px;">01/13</div>
<div class="t" style="position:absolute;left:57.25px;width:200px;text-align:center;top:385px;font-size:12px;color:#ccccdc;font-weight:400;white-space:nowrap;line-height:1;letter-spacing:0.5px;">01/28</div>
<div class="t" style="position:absolute;left:123.25px;width:200px;text-align:center;top:385px;font-size:12px;color:#ccccdc;font-weight:400;white-space:nowrap;line-height:1;letter-spacing:0.5px;">02/12</div>
<div class="t" style="position:absolute;left:190.25px;width:200px;text-align:center;top:385px;font-size:12px;color:#ccccdc;font-weight:400;white-space:nowrap;line-height:1;letter-spacing:0.5px;">02/27</div>
<div class="t" style="position:absolute;left:256.25px;width:200px;text-align:center;top:385px;font-size:12px;color:#ccccdc;font-weight:400;white-space:nowrap;line-height:1;letter-spacing:0.5px;">03/14</div>
<div class="t" style="position:absolute;left:322.25px;width:200px;text-align:center;top:385px;font-size:12px;color:#ccccdc;font-weight:400;white-space:nowrap;line-height:1;letter-spacing:0.5px;">03/29</div>
<div class="t" style="position:absolute;left:389.25px;width:200px;text-align:center;top:385px;font-size:12px;color:#ccccdc;font-weight:400;white-space:nowrap;line-height:1;letter-spacing:0.5px;">04/13</div>
<div class="t" style="position:absolute;left:455.25px;width:200px;text-align:center;top:385px;font-size:12px;color:#ccccdc;font-weight:400;white-space:nowrap;line-height:1;letter-spacing:0.5px;">04/28</div>
<div class="t" style="position:absolute;left:521.25px;width:200px;text-align:center;top:385px;font-size:12px;color:#ccccdc;font-weight:400;white-space:nowrap;line-height:1;letter-spacing:0.5px;">05/13</div>
<div class="t" style="position:absolute;left:588.25px;width:200px;text-align:center;top:385px;font-size:12px;color:#ccccdc;font-weight:400;white-space:nowrap;line-height:1;letter-spacing:0.5px;">05/28</div>
<div class="t" style="position:absolute;left:654.25px;width:200px;text-align:center;top:385px;font-size:12px;color:#ccccdc;font-weight:400;white-space:nowrap;line-height:1;letter-spacing:0.5px;">06/12</div>
<div class="t" style="position:absolute;left:721.25px;width:200px;text-align:center;top:385px;font-size:12px;color:#ccccdc;font-weight:400;white-space:nowrap;line-height:1;letter-spacing:0.5px;">06/27</div>
<div class="t" style="position:absolute;left:787.25px;width:200px;text-align:center;top:385px;font-size:12px;color:#ccccdc;font-weight:400;white-space:nowrap;line-height:1;letter-spacing:0.5px;">07/12</div>
<div class="t" style="position:absolute;right:1127.75px;top:481.5px;font-size:12px;color:#ccccdc;font-weight:400;white-space:nowrap;line-height:1;letter-spacing:0.25px;">90.9 PiB</div>
<div class="t" style="position:absolute;right:1127.75px;top:511.5px;font-size:12px;color:#ccccdc;font-weight:400;white-space:nowrap;line-height:1;letter-spacing:0.25px;">81.9 PiB</div>
<div class="t" style="position:absolute;right:1127.75px;top:542.5px;font-size:12px;color:#ccccdc;font-weight:400;white-space:nowrap;line-height:1;letter-spacing:0.25px;">72.8 PiB</div>
<div class="t" style="position:absolute;right:1127.75px;top:572.5px;font-size:12px;color:#ccccdc;font-weight:400;white-space:nowrap;line-height:1;letter-spacing:0.25px;">63.7 PiB</div>
<div class="t" style="position:absolute;right:1127.75px;top:603.5px;font-size:12px;color:#ccccdc;font-weight:400;white-space:nowrap;line-height:1;letter-spacing:0.25px;">54.6 PiB</div>
<div class="t" style="position:absolute;right:1127.75px;top:634.5px;font-size:12px;color:#ccccdc;font-weight:400;white-space:nowrap;line-height:1;letter-spacing:0.25px;">45.5 PiB</div>
<div class="t" style="position:absolute;right:1127.75px;top:664.5px;font-size:12px;color:#ccccdc;font-weight:400;white-space:nowrap;line-height:1;letter-spacing:0.25px;">36.4 PiB</div>
<div class="t" style="position:absolute;right:1127.75px;top:695.5px;font-size:12px;color:#ccccdc;font-weight:400;white-space:nowrap;line-height:1;letter-spacing:0.25px;">27.3 PiB</div>
<div class="t" style="position:absolute;right:1127.75px;top:726.5px;font-size:12px;color:#ccccdc;font-weight:400;white-space:nowrap;line-height:1;letter-spacing:0.25px;">18.2 PiB</div>
<div class="t" style="position:absolute;right:1127.75px;top:756.5px;font-size:12px;color:#ccccdc;font-weight:400;white-space:nowrap;line-height:1;letter-spacing:0.25px;">9.09 PiB</div>
<div class="t" style="position:absolute;right:1127.75px;top:787.5px;font-size:12px;color:#ccccdc;font-weight:400;white-space:nowrap;line-height:1;letter-spacing:0.25px;">0 KiB</div>
<div class="t" style="position:absolute;left:909px;top:482px;font-size:12px;color:#ccccdc;font-weight:400;white-space:nowrap;line-height:1;letter-spacing:0.25px;">1.10 Bil</div>
<div class="t" style="position:absolute;left:909px;top:514px;font-size:12px;color:#ccccdc;font-weight:400;white-space:nowrap;line-height:1;letter-spacing:0.25px;">1.08 Bil</div>
<div class="t" style="position:absolute;left:909px;top:546px;font-size:12px;color:#ccccdc;font-weight:400;white-space:nowrap;line-height:1;letter-spacing:0.25px;">1.05 Bil</div>
<div class="t" style="position:absolute;left:909px;top:578px;font-size:12px;color:#ccccdc;font-weight:400;white-space:nowrap;line-height:1;letter-spacing:0.25px;">1.02 Bil</div>
<div class="t" style="position:absolute;left:909px;top:610px;font-size:12px;color:#ccccdc;font-weight:400;white-space:nowrap;line-height:1;letter-spacing:0.25px;">1 Bil</div>
<div class="t" style="position:absolute;left:909px;top:642px;font-size:12px;color:#ccccdc;font-weight:400;white-space:nowrap;line-height:1;letter-spacing:0.25px;">975 Mil</div>
<div class="t" style="position:absolute;left:909px;top:674px;font-size:12px;color:#ccccdc;font-weight:400;white-space:nowrap;line-height:1;letter-spacing:0.25px;">950 Mil</div>
<div class="t" style="position:absolute;left:909px;top:706px;font-size:12px;color:#ccccdc;font-weight:400;white-space:nowrap;line-height:1;letter-spacing:0.25px;">925 Mil</div>
<div class="t" style="position:absolute;left:909px;top:738px;font-size:12px;color:#ccccdc;font-weight:400;white-space:nowrap;line-height:1;letter-spacing:0.25px;">900 Mil</div>
<div class="t" style="position:absolute;left:909px;top:770px;font-size:12px;color:#ccccdc;font-weight:400;white-space:nowrap;line-height:1;letter-spacing:0.25px;">875 Mil</div>
<div class="t" style="position:absolute;left:-9.75px;width:200px;text-align:center;top:803px;font-size:12px;color:#ccccdc;font-weight:400;white-space:nowrap;line-height:1;letter-spacing:0.5px;">01/13</div>
<div class="t" style="position:absolute;left:58.25px;width:200px;text-align:center;top:803px;font-size:12px;color:#ccccdc;font-weight:400;white-space:nowrap;line-height:1;letter-spacing:0.5px;">01/28</div>
<div class="t" style="position:absolute;left:125.25px;width:200px;text-align:center;top:803px;font-size:12px;color:#ccccdc;font-weight:400;white-space:nowrap;line-height:1;letter-spacing:0.5px;">02/12</div>
<div class="t" style="position:absolute;left:192.25px;width:200px;text-align:center;top:803px;font-size:12px;color:#ccccdc;font-weight:400;white-space:nowrap;line-height:1;letter-spacing:0.5px;">02/27</div>
<div class="t" style="position:absolute;left:259.25px;width:200px;text-align:center;top:803px;font-size:12px;color:#ccccdc;font-weight:400;white-space:nowrap;line-height:1;letter-spacing:0.5px;">03/14</div>
<div class="t" style="position:absolute;left:327.25px;width:200px;text-align:center;top:803px;font-size:12px;color:#ccccdc;font-weight:400;white-space:nowrap;line-height:1;letter-spacing:0.5px;">03/29</div>
<div class="t" style="position:absolute;left:394.25px;width:200px;text-align:center;top:803px;font-size:12px;color:#ccccdc;font-weight:400;white-space:nowrap;line-height:1;letter-spacing:0.5px;">04/13</div>
<div class="t" style="position:absolute;left:461.25px;width:200px;text-align:center;top:803px;font-size:12px;color:#ccccdc;font-weight:400;white-space:nowrap;line-height:1;letter-spacing:0.5px;">04/28</div>
<div class="t" style="position:absolute;left:528.25px;width:200px;text-align:center;top:803px;font-size:12px;color:#ccccdc;font-weight:400;white-space:nowrap;line-height:1;letter-spacing:0.5px;">05/13</div>
<div class="t" style="position:absolute;left:596.25px;width:200px;text-align:center;top:803px;font-size:12px;color:#ccccdc;font-weight:400;white-space:nowrap;line-height:1;letter-spacing:0.5px;">05/28</div>
<div class="t" style="position:absolute;left:663.25px;width:200px;text-align:center;top:803px;font-size:12px;color:#ccccdc;font-weight:400;white-space:nowrap;line-height:1;letter-spacing:0.5px;">06/12</div>
<div class="t" style="position:absolute;left:730.25px;width:200px;text-align:center;top:803px;font-size:12px;color:#ccccdc;font-weight:400;white-space:nowrap;line-height:1;letter-spacing:0.5px;">06/27</div>
<div class="t" style="position:absolute;left:797.25px;width:200px;text-align:center;top:803px;font-size:12px;color:#ccccdc;font-weight:400;white-space:nowrap;line-height:1;letter-spacing:0.5px;">07/12</div>
<div class="t" style="position:absolute;right:11px;top:43px;font-size:12px;color:#6e9fff;font-weight:700;white-space:nowrap;line-height:1;-webkit-text-stroke:0;">Last *</div>
<div style="position:absolute;left:1143px;top:60px;width:61px;height:1px;background:#25272c"></div>
<div style="position:absolute;left:966px;top:83px;width:238px;height:1px;background:#25272c"></div>
<div style="position:absolute;left:966px;top:106px;width:238px;height:1px;background:#25272c"></div>
<div style="position:absolute;left:966px;top:129px;width:238px;height:1px;background:#25272c"></div>
<div style="position:absolute;left:974px;top:70px;width:14px;height:4px;border-radius:1px;background:#bf1b00"></div>
<div class="t" style="position:absolute;left:997px;top:66px;font-size:12.5px;color:#ccccdc;font-weight:400;white-space:nowrap;line-height:1;">scratch quota</div>
<div class="t" style="position:absolute;right:11px;top:66px;font-size:12.5px;color:#ccccdc;font-weight:400;white-space:nowrap;line-height:1;">15 PiB</div>
<div style="position:absolute;left:974px;top:93px;width:14px;height:4px;border-radius:1px;background:#7eb26d"></div>
<div class="t" style="position:absolute;left:997px;top:89px;font-size:12.5px;color:#ccccdc;font-weight:400;white-space:nowrap;line-height:1;">scratch usage</div>
<div class="t" style="position:absolute;right:11px;top:89px;font-size:12.5px;color:#ccccdc;font-weight:400;white-space:nowrap;line-height:1;">12.2 PiB</div>
<div style="position:absolute;left:974px;top:116px;width:14px;height:4px;border-radius:1px;background:#5195ce"></div>
<div class="t" style="position:absolute;left:997px;top:112px;font-size:12.5px;color:#ccccdc;font-weight:400;white-space:nowrap;line-height:1;">scratch files <span style="color:rgba(204,204,220,0.65)">(right y-axis)</span></div>
<div class="t" style="position:absolute;right:11px;top:112px;font-size:12.5px;color:#ccccdc;font-weight:400;white-space:nowrap;line-height:1;">1.23 Bil</div>
<div class="t" style="position:absolute;right:11px;top:461px;font-size:12px;color:#6e9fff;font-weight:700;white-space:nowrap;line-height:1;-webkit-text-stroke:0;">Last *</div>
<div style="position:absolute;left:1143px;top:478px;width:61px;height:1px;background:#25272c"></div>
<div style="position:absolute;left:977px;top:501px;width:227px;height:1px;background:#25272c"></div>
<div style="position:absolute;left:977px;top:524px;width:227px;height:1px;background:#25272c"></div>
<div style="position:absolute;left:977px;top:547px;width:227px;height:1px;background:#25272c"></div>
<div style="position:absolute;left:985px;top:488px;width:14px;height:4px;border-radius:1px;background:#bf1b00"></div>
<div class="t" style="position:absolute;left:1007px;top:484px;font-size:12.5px;color:#ccccdc;font-weight:400;white-space:nowrap;line-height:1;">csfs1 quota</div>
<div class="t" style="position:absolute;right:11px;top:484px;font-size:12.5px;color:#ccccdc;font-weight:400;white-space:nowrap;line-height:1;">93.5 PiB</div>
<div style="position:absolute;left:985px;top:511px;width:14px;height:4px;border-radius:1px;background:#7eb26d"></div>
<div class="t" style="position:absolute;left:1007px;top:507px;font-size:12.5px;color:#ccccdc;font-weight:400;white-space:nowrap;line-height:1;">csfs1 usage</div>
<div class="t" style="position:absolute;right:11px;top:507px;font-size:12.5px;color:#ccccdc;font-weight:400;white-space:nowrap;line-height:1;">56.5 PiB</div>
<div style="position:absolute;left:985px;top:534px;width:14px;height:4px;border-radius:1px;background:#5195ce"></div>
<div class="t" style="position:absolute;left:1007px;top:530px;font-size:12.5px;color:#ccccdc;font-weight:400;white-space:nowrap;line-height:1;">csfs1 files <span style="color:rgba(204,204,220,0.65)">(right y-axis)</span></div>
<div class="t" style="position:absolute;right:11px;top:530px;font-size:12.5px;color:#ccccdc;font-weight:400;white-space:nowrap;line-height:1;">1.10 Bil</div>
<div class="t" style="position:absolute;left:-39.3px;top:205.8px;width:100px;height:12px;text-align:center;transform:rotate(-90deg);transform-origin:50% 50%;font-size:12px;color:#ccccdc;line-height:12px">Data</div>
<div class="t" style="position:absolute;left:911.2px;top:206px;width:100px;height:12px;text-align:center;transform:rotate(90deg);transform-origin:50% 50%;font-size:12px;color:#ccccdc;line-height:12px">Files</div>
<div class="t" style="position:absolute;left:-39.3px;top:623.8px;width:100px;height:12px;text-align:center;transform:rotate(-90deg);transform-origin:50% 50%;font-size:12px;color:#ccccdc;line-height:12px">Data</div>
<div class="t" style="position:absolute;left:922.3px;top:624px;width:100px;height:12px;text-align:center;transform:rotate(90deg);transform-origin:50% 50%;font-size:12px;color:#ccccdc;line-height:12px">Files</div>
</body></html>
